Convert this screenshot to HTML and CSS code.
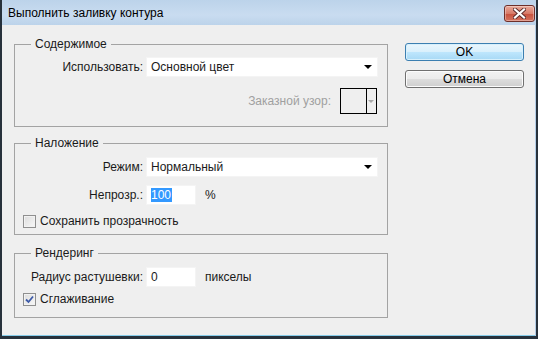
FILE: index.html
```html
<!DOCTYPE html>
<html lang="ru">
<head>
    <meta charset="UTF-8">
    <meta name="viewport" content="width=device-width, initial-scale=1.0">
    <title>Выполнить заливку контура</title>
    <link rel="stylesheet" href="styles.css">
</head>
<body>
    <div class="window">
        <div class="titlebar">
            <span class="title">Выполнить заливку контура</span>
            <button class="close-btn" title="Закрыть">
                <svg width="13" height="11" viewBox="0 0 13 11">
                    <path d="M2 1.5 L11 9.5 M11 1.5 L2 9.5" stroke="#5a2b2b" stroke-width="4" stroke-linecap="square"/>
                    <path d="M2 1.5 L11 9.5 M11 1.5 L2 9.5" stroke="#ffffff" stroke-width="2.2" stroke-linecap="square"/>
                </svg>
            </button>
        </div>

        <div class="client">
            <div class="groups">
                <!-- Содержимое -->
                <fieldset class="group group-content">
                    <legend>Содержимое</legend>
                    <div class="row">
                        <span class="lbl">Использовать:</span>
                        <div class="select">Основной цвет<span class="arrow"></span></div>
                    </div>
                    <div class="row row-pattern">
                        <span class="lbl-disabled">Заказной узор:</span>
                        <div class="swatch">
                            <span class="swatch-fill"></span>
                            <span class="swatch-drop"><span class="arrow arrow-gray"></span></span>
                        </div>
                    </div>
                </fieldset>

                <!-- Наложение -->
                <fieldset class="group group-blend">
                    <legend>Наложение</legend>
                    <div class="row">
                        <span class="lbl">Режим:</span>
                        <div class="select">Нормальный<span class="arrow"></span></div>
                    </div>
                    <div class="row row-gap">
                        <span class="lbl">Непрозр.:</span>
                        <div class="field"><span class="selected">100</span></div>
                        <span class="unit">%</span>
                    </div>
                    <div class="check-row check-row-blend">
                        <span class="checkbox"></span>
                        <span>Сохранить прозрачность</span>
                    </div>
                </fieldset>

                <!-- Рендеринг -->
                <fieldset class="group group-render">
                    <legend>Рендеринг</legend>
                    <div class="row">
                        <span class="lbl">Радиус растушевки:</span>
                        <div class="field">0</div>
                        <span class="unit">пикселы</span>
                    </div>
                    <div class="check-row check-row-render">
                        <span class="checkbox">
                            <svg width="9" height="9" viewBox="0 0 9 9">
                                <path d="M1 4.5 L3.5 7 L8 1.5" fill="none" stroke="#3d5aa8" stroke-width="1.8"/>
                            </svg>
                        </span>
                        <span>Сглаживание</span>
                    </div>
                </fieldset>
            </div>

            <div class="buttons">
                <button class="btn btn-default">OK</button>
                <button class="btn">Отмена</button>
            </div>
        </div>
    </div>
</body>
</html>
```

FILE: styles.css
```css
body {
    margin: 0;
    font-family: "Liberation Sans", Arial, sans-serif;
    font-size: 12px;
    color: #1a1a1a;
}

.window {
    width: 538px;
    height: 339px;
    box-sizing: border-box;
    display: flex;
    flex-direction: column;
    background: #b4cde6;
    border-style: solid;
    border-color: #27313b;
    border-width: 0 2px 3px 2px;
}

/* Title bar */
.titlebar {
    height: 25px;
    display: flex;
    align-items: center;
    justify-content: space-between;
    padding: 0 1px 0 6px;
    background: linear-gradient(#bcd3ea, #c9dcf0 60%, #bcd3ea);
    flex-shrink: 0;
}

.title {
    line-height: 16px;
    color: #000;
}

.close-btn {
    width: 31px;
    height: 17px;
    margin-top: 2px;
    padding: 0;
    display: flex;
    align-items: center;
    justify-content: center;
    border: 1px solid #6d2f2a;
    border-radius: 3px;
    background: linear-gradient(#e9a99a, #d77a68 50%, #c7503c 51%, #d4725e);
    box-shadow: inset 0 0 0 1px rgba(255, 255, 255, 0.35);
}

/* Client area */
.client {
    flex: 1;
    display: flex;
    gap: 17px;
    margin: 0 1px 1px 0;
    padding: 11px 10px 0 12px;
    background: #efefef;
    box-shadow: 0 1px 0 #86cbe8;
}

.groups {
    width: 374px;
}

.group {
    margin: 0;
    padding: 0 9px 0 0;
    border: 1px solid #a3a3a3;
    min-width: 0;
}

.group legend {
    margin-left: 16px;
    padding: 0 4px;
    line-height: 16px;
}

.group-content {
    padding-top: 5px;
    padding-bottom: 12px;
}

.group-blend {
    margin-top: 8px;
    padding-top: 6px;
    padding-bottom: 5px;
}

.group-render {
    margin-top: 10px;
    padding-top: 6px;
    padding-bottom: 10px;
}

.row {
    display: flex;
    align-items: center;
}

.row-gap {
    margin-top: 8px;
}

.lbl {
    width: 128px;
    margin-right: 3px;
    text-align: right;
}

.select {
    position: relative;
    flex: 1;
    height: 20px;
    line-height: 20px;
    padding-left: 5px;
    background: #fff;
    box-shadow: inset 0 0 0 1px #f4f4f4;
}

.arrow {
    position: absolute;
    right: 6px;
    top: 8px;
    width: 0;
    height: 0;
    border-left: 4px solid transparent;
    border-right: 4px solid transparent;
    border-top: 4px solid #000;
}

.arrow-gray {
    right: 2px;
    top: 11px;
    border-left-width: 3px;
    border-right-width: 3px;
    border-top: 3px solid #a8a8a8;
}

.row-pattern {
    justify-content: flex-end;
    margin-top: 11px;
    padding-right: 1px;
}

.lbl-disabled {
    color: #a0a0a0;
    margin-right: 9px;
}

.swatch {
    display: flex;
    width: 37px;
    height: 26px;
    box-sizing: border-box;
    border: 1px solid #000;
}

.swatch-fill {
    flex: 1;
    border-right: 1px solid #000;
}

.swatch-drop {
    position: relative;
    width: 9px;
}

.field {
    width: 50px;
    height: 20px;
    line-height: 20px;
    box-sizing: border-box;
    padding-left: 5px;
    background: #fff;
    box-shadow: inset 0 0 0 1px #f4f4f4;
}

.selected {
    background: #3399ff;
    color: #fff;
    padding-right: 1px;
}

.unit {
    margin-left: 9px;
}

.check-row {
    display: flex;
    align-items: center;
    height: 16px;
    padding-left: 8px;
}

.check-row-blend {
    margin-top: 8px;
}

.check-row-render {
    margin-top: 4px;
}

.checkbox {
    width: 13px;
    height: 13px;
    box-sizing: border-box;
    margin-right: 4px;
    display: flex;
    align-items: center;
    justify-content: center;
    border: 1px solid #8f8f8f;
    background: linear-gradient(135deg, #dcdcdc, #f8f8f8);
    box-shadow: inset 0 0 0 1px #f2f2f2;
}

/* Buttons */
.buttons {
    display: flex;
    flex-direction: column;
    gap: 9px;
    width: 119px;
    padding-top: 7px;
}

.btn {
    height: 18px;
    padding: 0;
    font-family: inherit;
    font-size: 12px;
    color: #000;
    border: 1px solid #707070;
    border-radius: 3px;
    background: linear-gradient(#f2f2f2, #ebebeb 50%, #dddddd 51%, #cfcfcf);
    box-shadow: inset 0 0 0 1px #fcfcfc;
}

.btn-default {
    border-color: #3c7fb1;
    background: linear-gradient(#eaf6fd, #d9f0fc 50%, #bee6fd 51%, #a7d9f5);
    box-shadow: inset 0 0 0 1px #d7f0fc;
}
```
